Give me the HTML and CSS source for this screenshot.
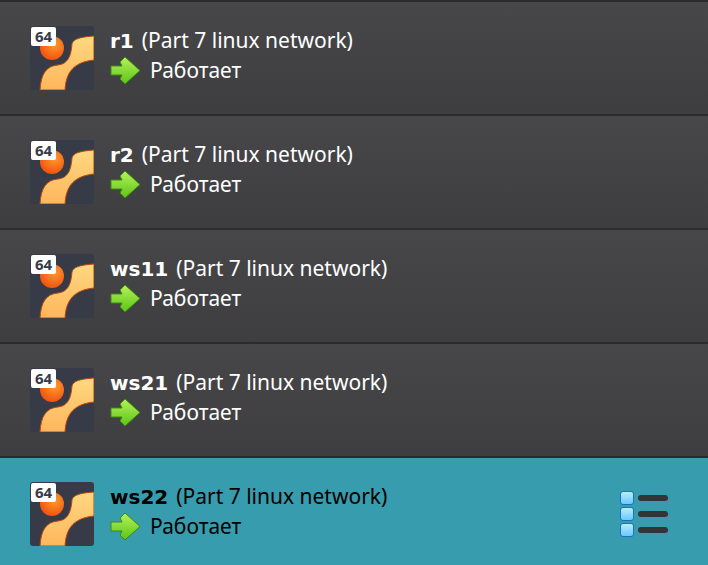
FILE: index.html
```html
<!DOCTYPE html>
<html lang="ru">
<head>
<meta charset="utf-8">
<title>VirtualBox</title>
<link rel="stylesheet" href="styles.css">
</head>
<body>
<svg class="defs" width="0" height="0" aria-hidden="true">
  <defs>
    <linearGradient id="swirl" x1="0" y1="0" x2="0" y2="1">
      <stop offset="0" stop-color="#ffd880"/>
      <stop offset="1" stop-color="#ffb65c"/>
    </linearGradient>
    <radialGradient id="ball" cx="0.6" cy="0.35" r="0.8">
      <stop offset="0" stop-color="#ff9a2e"/>
      <stop offset="1" stop-color="#ee4408"/>
    </radialGradient>
    <linearGradient id="arrow" x1="0" y1="0" x2="0" y2="1">
      <stop offset="0" stop-color="#b4f25a"/>
      <stop offset="1" stop-color="#5cc416"/>
    </linearGradient>
    <symbol id="os" viewBox="0 0 64 64">
      <rect width="64" height="64" rx="3" fill="#373b47"/>
      <circle cx="22" cy="22" r="12" fill="url(#ball)"/>
      <path d="M64 10 C50 11 43 13 42 18 C41 30 38 38 28 39 C16 40 11 48 10 64 L35 64 C36 46 44 36 64 34 Z" fill="url(#swirl)" stroke="#b8480f" stroke-width="1"/>
    </symbol>
    <symbol id="go" viewBox="0 0 30 30">
      <path d="M1 10 H12 L10 6 L15 1 L30 14.5 L15 28 L10 23 L12 19 H1 Z" fill="url(#arrow)" stroke="#3f8a12" stroke-width="1" stroke-linejoin="round"/>
    </symbol>
  </defs>
</svg>
<main class="list">
  <article class="row">
    <div class="thumb"><svg class="os"><use href="#os"/></svg><span class="badge">64</span></div>
    <div class="info">
      <div class="title"><b class="name">r1</b><span class="desc">(Part 7 linux network)</span></div>
      <div class="state"><svg class="go"><use href="#go"/></svg><span class="label">Работает</span></div>
    </div>
  </article>
  <article class="row">
    <div class="thumb"><svg class="os"><use href="#os"/></svg><span class="badge">64</span></div>
    <div class="info">
      <div class="title"><b class="name">r2</b><span class="desc">(Part 7 linux network)</span></div>
      <div class="state"><svg class="go"><use href="#go"/></svg><span class="label">Работает</span></div>
    </div>
  </article>
  <article class="row">
    <div class="thumb"><svg class="os"><use href="#os"/></svg><span class="badge">64</span></div>
    <div class="info">
      <div class="title"><b class="name">ws11</b><span class="desc">(Part 7 linux network)</span></div>
      <div class="state"><svg class="go"><use href="#go"/></svg><span class="label">Работает</span></div>
    </div>
  </article>
  <article class="row">
    <div class="thumb"><svg class="os"><use href="#os"/></svg><span class="badge">64</span></div>
    <div class="info">
      <div class="title"><b class="name">ws21</b><span class="desc">(Part 7 linux network)</span></div>
      <div class="state"><svg class="go"><use href="#go"/></svg><span class="label">Работает</span></div>
    </div>
  </article>
  <article class="row selected">
    <div class="thumb"><svg class="os"><use href="#os"/></svg><span class="badge">64</span></div>
    <div class="info">
      <div class="title"><b class="name">ws22</b><span class="desc">(Part 7 linux network)</span></div>
      <div class="state"><svg class="go"><use href="#go"/></svg><span class="label">Работает</span></div>
    </div>
    <div class="tools">
      <div class="tool"><i></i><s></s></div>
      <div class="tool"><i></i><s></s></div>
      <div class="tool"><i></i><s></s></div>
    </div>
  </article>
</main>
</body>
</html>
```
FILE: styles.css
```css
html, body { margin: 0; padding: 0; }
body {
  width: 708px;
  height: 565px;
  overflow: hidden;
  background: #3f3f41;
  font-family: "Noto Sans", sans-serif;
  font-size: 21px;
}
.defs { position: absolute; }
.list { display: flex; flex-direction: column; }
.row {
  height: 112px;
  flex: none;
  display: flex;
  align-items: center;
  padding: 0 40px 0 30px;
  border-top: 2px solid #2c2c2e;
  background: linear-gradient(#474749, #3e3e40);
  color: #fff;
}
.row.selected {
  background: #379cad;
  color: #000;
  border-top-color: #2a2a2c;
}
.thumb { position: relative; width: 64px; height: 64px; flex: none; }
.os { display: block; width: 64px; height: 64px; }
.badge {
  position: absolute;
  left: 1px;
  top: 1px;
  width: 25px;
  height: 19px;
  background: #fff;
  border-radius: 2px;
  color: #373b47;
  font-weight: bold;
  font-size: 15px;
  line-height: 19px;
  text-align: center;
}
.info {
  margin-left: 16px;
  padding-bottom: 4px;
  flex: 1;
  display: flex;
  flex-direction: column;
  gap: 2px;
}
.title { line-height: 26px; white-space: nowrap; }
.name {
  font-family: "DejaVu Sans", sans-serif;
  font-size: 20px;
  font-weight: bold;
}
.desc { margin-left: 8px; }
.state { display: flex; align-items: center; gap: 10px; line-height: 26px; }
.label { padding-bottom: 2px; }
.go { display: block; width: 30px; height: 30px; }
.tools { display: flex; flex-direction: column; gap: 2px; }
.tool { display: flex; align-items: center; gap: 4px; }
.tool i {
  display: block;
  width: 12px;
  height: 12px;
  border: 1px solid #1873c4;
  border-radius: 3px;
  background: linear-gradient(#b8ecff, #6cc8fb);
}
.tool s {
  display: block;
  width: 30px;
  height: 6px;
  border-radius: 3px;
  background: #333537;
}
```
